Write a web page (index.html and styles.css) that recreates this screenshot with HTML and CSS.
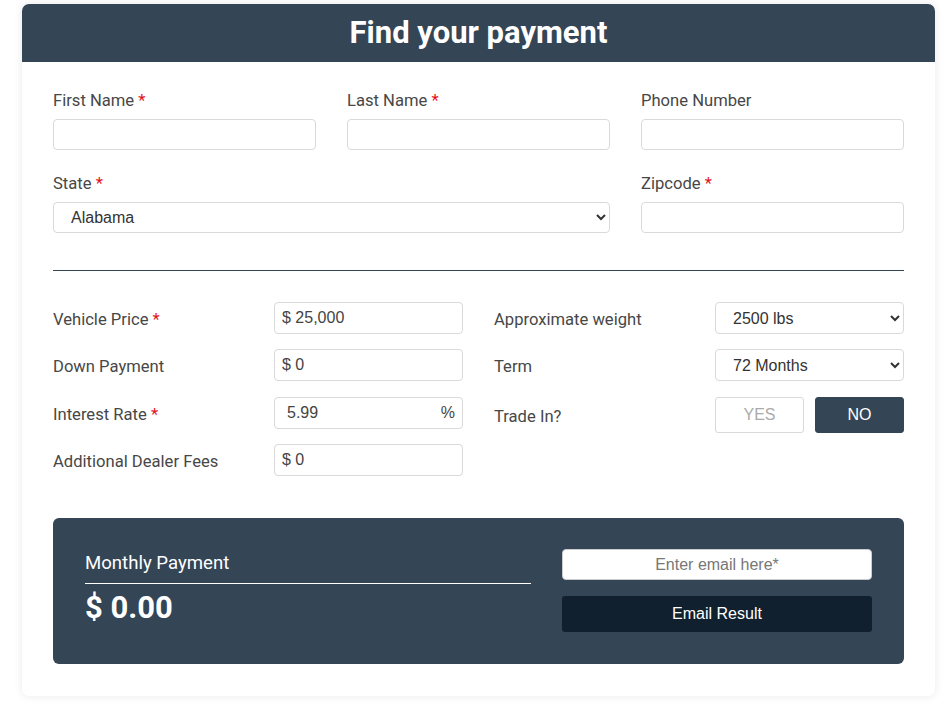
FILE: index.html
```html
<!DOCTYPE html>
<html>
<head>
<meta charset="utf-8">
<link rel="stylesheet" href="styles.css">
</head>
<body>
<div class="card">
  <div class="card-head"><h1>Find your payment</h1></div>
  <div class="card-body">
    <div class="grid3">
      <div class="field">
        <label>First Name <span class="req">*</span></label>
        <input class="ctl" type="text">
      </div>
      <div class="field">
        <label>Last Name <span class="req">*</span></label>
        <input class="ctl" type="text">
      </div>
      <div class="field">
        <label>Phone Number</label>
        <input class="ctl" type="text">
      </div>
      <div class="field span2">
        <label>State <span class="req">*</span></label>
        <select class="ctl sel sel-state"><option>Alabama</option></select>
      </div>
      <div class="field">
        <label>Zipcode <span class="req">*</span></label>
        <input class="ctl" type="text">
      </div>
    </div>
    <hr class="divider">
    <div class="calc">
      <div class="col">
        <div class="row"><span class="lbl">Vehicle Price <span class="req">*</span></span><input class="ctl num" type="text" value="$ 25,000"></div>
        <div class="row"><span class="lbl">Down Payment</span><input class="ctl num" type="text" value="$ 0"></div>
        <div class="row"><span class="lbl">Interest Rate <span class="req">*</span></span>
          <div class="ctl pct"><span class="pct-val">5.99</span><span class="pct-sign">%</span></div>
        </div>
        <div class="row"><span class="lbl">Additional Dealer Fees</span><input class="ctl num" type="text" value="$ 0"></div>
      </div>
      <div class="col">
        <div class="row"><span class="lbl">Approximate weight</span><select class="ctl sel"><option>2500 lbs</option></select></div>
        <div class="row"><span class="lbl">Term</span><select class="ctl sel"><option>72 Months</option></select></div>
        <div class="row row-yn"><span class="lbl">Trade In?</span>
          <div class="yn"><button class="btn-yes">YES</button><button class="btn-no">NO</button></div>
        </div>
      </div>
    </div>
    <div class="result">
      <div class="res-left">
        <div class="res-title">Monthly Payment</div>
        <div class="res-amount">$ 0.00</div>
      </div>
      <div class="res-right">
        <input class="email" type="text" placeholder="Enter email here*">
        <button class="btn-email">Email Result</button>
      </div>
    </div>
  </div>
</div>
</body>
</html>
```

FILE: styles.css
```css
* { box-sizing: border-box; }
html, body { margin: 0; padding: 0; background: #fff; }
body { font-family: Roboto, "Liberation Sans", Arial, sans-serif; color: #444; }

.card {
  margin: 4px 13px 14px 22px;
  width: 913px;
  background: #fff;
  border-radius: 7px;
  box-shadow: 0 0 10px rgba(0,0,0,0.09);
  overflow: hidden;
}
.card-head {
  background: #344556;
  height: 58px;
  display: flex;
  align-items: center;
  justify-content: center;
}
.card-head h1 {
  margin: 0;
  color: #fff;
  font-family: Roboto, sans-serif;
  font-weight: 700;
  font-size: 31px;
  letter-spacing: 0;
  line-height: 1;
  padding-bottom: 1px;
}
.card-body { padding: 29px 31px 32px 31px; }

.grid3 {
  display: grid;
  grid-template-columns: 263px 263px 263px;
  column-gap: 31px;
  row-gap: 24px;
}
.span2 { grid-column: span 2; }
.field label {
  display: block;
  font-size: 16.6px;
  line-height: 19px;
  margin-bottom: 9px;
  color: #474747;
}
.req { color: #e3121a; }

.ctl {
  display: block;
  width: 100%;
  height: 31px;
  border: 1px solid #d9d9d9;
  border-radius: 4px;
  background: #fff;
  font-family: "Liberation Sans", Arial, sans-serif;
  font-size: 16px;
  color: #444;
  outline: none;
}
input.ctl { padding: 0 7px; }
.sel { padding: 0 12px 0 13px; color: #333; }

.divider {
  border: 0;
  border-top: 1px solid #344556;
  margin: 37px 0 31px 0;
  height: 0;
}

.calc {
  display: grid;
  grid-template-columns: 410px 410px;
  column-gap: 31px;
}
.col { display: flex; flex-direction: column; gap: 15.4px; }
.row {
  display: flex;
  align-items: center;
  justify-content: space-between;
  height: 32px;
}
.row .ctl { width: 189px; height: 32px; flex: none; }
.lbl { font-size: 16.6px; color: #474747; padding-top: 3px; }
.num { color: #444; }
.pct {
  display: flex;
  align-items: center;
  justify-content: space-between;
  padding: 0 7px 0 12px;
}
.pct-val, .pct-sign { font-size: 16px; color: #444; }

.row-yn { height: 36px; }
.yn { display: flex; gap: 11px; width: 189px; }
.yn button {
  width: 89px;
  height: 36px;
  border-radius: 3px;
  font-family: "Liberation Sans", Arial, sans-serif;
  font-size: 16px;
  cursor: pointer;
}
.btn-yes { background: #fff; border: 1px solid #d9d9d9; color: #aaa; }
.btn-no { background: #344556; border: 1px solid #344556; color: #fff; }

.result {
  margin-top: 42px;
  background: #344556;
  border-radius: 6px;
  height: 146px;
  display: flex;
  padding: 31px 32px 32px 32px;
  gap: 31px;
}
.res-left { width: 446px; padding-top: 4px; }
.res-title {
  color: #fff;
  font-size: 18.6px;
  line-height: 21px;
  padding-bottom: 9px;
  border-bottom: 1px solid #fff;
}
.res-amount {
  color: #fff;
  font-weight: 700;
  font-size: 31px;
  line-height: 36px;
  margin-top: 6px;
}
.res-right {
  width: 310px;
  display: flex;
  flex-direction: column;
  gap: 16px;
}
.email {
  height: 31px;
  width: 100%;
  border: 1px solid #ccc;
  border-radius: 4px;
  background: #fff;
  text-align: center;
  font-family: "Liberation Sans", Arial, sans-serif;
  font-size: 16px;
  outline: none;
}
.email::placeholder { color: #777; }
.btn-email {
  height: 36px;
  width: 100%;
  border: 0;
  border-radius: 3px;
  background: #11202f;
  color: #fff;
  font-family: "Liberation Sans", Arial, sans-serif;
  font-size: 16px;
}
```
